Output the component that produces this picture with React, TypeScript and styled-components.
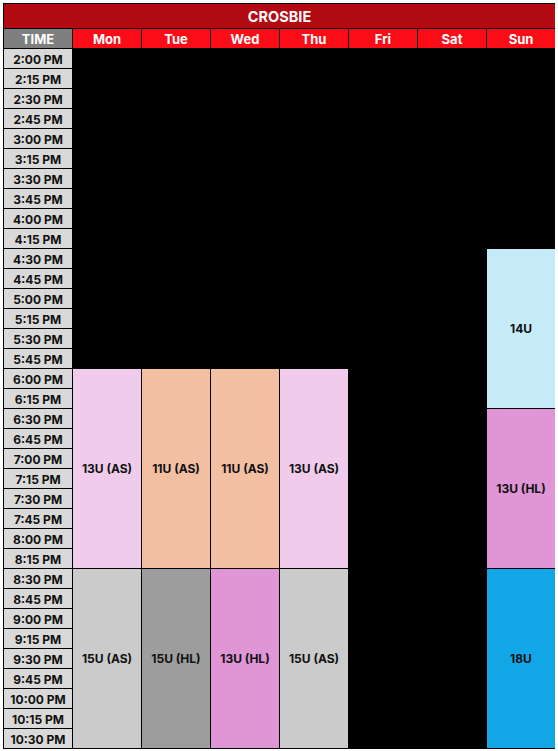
import * as React from 'react';
import styled, { createGlobalStyle } from 'styled-components';

const GlobalStyle = createGlobalStyle`
  body {
    margin: 3px;
    background: #fff;
    font-family: Inter, 'Liberation Sans', sans-serif;
  }
`;

const Sheet = styled.div`
  display: grid;
  grid-template-columns: repeat(8, 68px);
  grid-template-rows: 24px 19px repeat(35, 19px);
  gap: 1px;
  padding: 1px;
  width: max-content;
  background: #000;
`;

const Title = styled.div`
  grid-column: 1 / -1;
  background: #b30b12;
  color: #fff;
  font-weight: 700;
  font-size: 14.5px;
  padding-top: 1px;
  display: flex;
  align-items: center;
  justify-content: center;
`;

const HeadCell = styled.div<{ $time?: boolean }>`
  background: ${(p) => (p.$time ? '#7f7f7f' : '#fb0c16')};
  color: #fff;
  font-weight: 700;
  font-size: 13px;
  display: flex;
  align-items: center;
  justify-content: center;
`;

const TimeCell = styled.div<{ $row: number }>`
  grid-column: 1;
  grid-row: ${(p) => p.$row};
  background: #d9d9d9;
  color: #111;
  font-weight: 700;
  font-size: 12px;
  padding-top: 1px;
  display: flex;
  align-items: center;
  justify-content: center;
`;

const Block = styled.div<{ $col: number; $row: number; $span: number; $bg: string }>`
  grid-column: ${(p) => p.$col};
  grid-row: ${(p) => p.$row} / span ${(p) => p.$span};
  background: ${(p) => p.$bg};
  color: #111;
  font-weight: 700;
  font-size: 12px;
  display: flex;
  align-items: center;
  justify-content: center;
`;

const days = ['Mon', 'Tue', 'Wed', 'Thu', 'Fri', 'Sat', 'Sun'];

const times: string[] = [];
for (let m = 14 * 60; m <= 22 * 60 + 30; m += 15) {
  const h = Math.floor(m / 60) - 12;
  const mm = m % 60;
  times.push(`${h}:${mm.toString().padStart(2, '0')} PM`);
}

// first row index (0 = 2:00 PM), number of slots
const blocks = [
  { day: 0, start: 16, span: 10, label: '13U (AS)', bg: '#f0cbec' },
  { day: 1, start: 16, span: 10, label: '11U (AS)', bg: '#f3bfa2' },
  { day: 2, start: 16, span: 10, label: '11U (AS)', bg: '#f3bfa2' },
  { day: 3, start: 16, span: 10, label: '13U (AS)', bg: '#f0cbec' },
  { day: 0, start: 26, span: 9, label: '15U (AS)', bg: '#cbcbcb' },
  { day: 1, start: 26, span: 9, label: '15U (HL)', bg: '#9d9d9d' },
  { day: 2, start: 26, span: 9, label: '13U (HL)', bg: '#df95d6' },
  { day: 3, start: 26, span: 9, label: '15U (AS)', bg: '#cbcbcb' },
  { day: 6, start: 10, span: 8, label: '14U', bg: '#c5eaf8' },
  { day: 6, start: 18, span: 8, label: '13U (HL)', bg: '#df95d6' },
  { day: 6, start: 26, span: 9, label: '18U', bg: '#12a6e6' },
];

export default function App() {
  return (
    <>
      <GlobalStyle />
      <Sheet>
        <Title>CROSBIE</Title>
        <HeadCell $time>TIME</HeadCell>
        {days.map((d) => (
          <HeadCell key={d}>{d}</HeadCell>
        ))}
        {times.map((t, i) => (
          <TimeCell key={t} $row={i + 3}>
            {t}
          </TimeCell>
        ))}
        {blocks.map((b, i) => (
          <Block key={i} $col={b.day + 2} $row={b.start + 3} $span={b.span} $bg={b.bg}>
            {b.label}
          </Block>
        ))}
      </Sheet>
    </>
  );
}
